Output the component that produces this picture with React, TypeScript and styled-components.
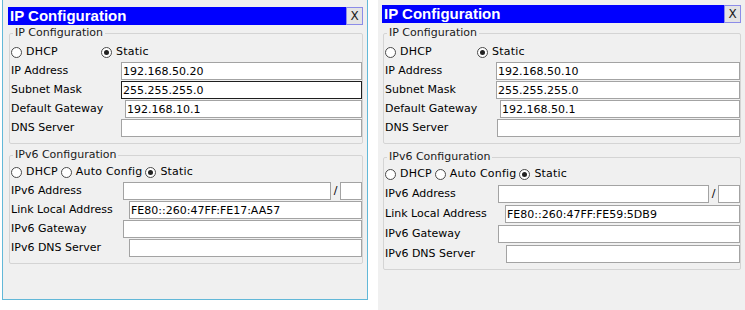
import React from 'react';
import styled, { createGlobalStyle } from 'styled-components';

type Field = { label: string; value?: string; lw: number; focused?: boolean };

type PanelConfig = {
  left: number;
  width: number;
  height: number;
  framed: boolean;
  padTop: number;
  titleGap: number;
  groupGap: number;
  staticAt: number;
  gap6: number;
  ipv4: Field[];
  ipv6Address: number;
  ipv6: Field[];
};

const panels: PanelConfig[] = [
  {
    left: 2,
    width: 366,
    height: 300,
    framed: true,
    padTop: 7,
    titleGap: 1,
    groupGap: 4,
    staticAt: 87,
    gap6: 1,
    ipv4: [
      { label: 'IP Address', value: '192.168.50.20', lw: 110 },
      { label: 'Subnet Mask', value: '255.255.255.0', lw: 110, focused: true },
      { label: 'Default Gateway', value: '192.168.10.1', lw: 114 },
      { label: 'DNS Server', lw: 110 }
    ],
    ipv6Address: 112,
    ipv6: [
      { label: 'Link Local Address', value: 'FE80::260:47FF:FE17:AA57', lw: 118 },
      { label: 'IPv6 Gateway', lw: 112 },
      { label: 'IPv6 DNS Server', lw: 118 }
    ]
  },
  {
    left: 10,
    width: 367,
    height: 310,
    framed: false,
    padTop: 5,
    titleGap: 3,
    groupGap: 6,
    staticAt: 89,
    gap6: 2,
    ipv4: [
      { label: 'IP Address', value: '192.168.50.10', lw: 111 },
      { label: 'Subnet Mask', value: '255.255.255.0', lw: 111 },
      { label: 'Default Gateway', value: '192.168.50.1', lw: 115 },
      { label: 'DNS Server', lw: 112 }
    ],
    ipv6Address: 113,
    ipv6: [
      { label: 'Link Local Address', value: 'FE80::260:47FF:FE59:5DB9', lw: 120 },
      { label: 'IPv6 Gateway', lw: 113 },
      { label: 'IPv6 DNS Server', lw: 121 }
    ]
  }
];

const Radio: React.FC<{ label: string; checked?: boolean; minWidth?: number }> = ({ label, checked, minWidth }) => (
  <RadioOption $minWidth={minWidth}>
    <RadioCircle $checked={!!checked} />
    <span>{label}</span>
  </RadioOption>
);

const FieldLine: React.FC<{ field: Field }> = ({ field }) => (
  <FieldRow>
    <Label $w={field.lw}>{field.label}</Label>
    <TextBox readOnly value={field.value ?? ''} $focused={!!field.focused} />
  </FieldRow>
);

const ConfigWindow: React.FC<{ cfg: PanelConfig }> = ({ cfg }) => (
  <Window $left={cfg.left} $width={cfg.width} $height={cfg.height} $framed={cfg.framed} $padTop={cfg.padTop}>
    <TitleBar $gap={cfg.titleGap}>
      <TitleText>IP Configuration</TitleText>
      <CloseButton>X</CloseButton>
    </TitleBar>

    <Group $padTop={3}>
      <Legend>IP Configuration</Legend>
      <Rows $gap={1}>
        <RadioRow>
          <Radio label="DHCP" minWidth={cfg.staticAt} />
          <Radio label="Static" checked />
        </RadioRow>
        {cfg.ipv4.map(f => (
          <FieldLine key={f.label} field={f} />
        ))}
      </Rows>
    </Group>

    <Group $top={cfg.groupGap} $padTop={1}>
      <Legend>IPv6 Configuration</Legend>
      <Rows $gap={cfg.gap6}>
        <RadioRow>
          <Radio label="DHCP" />
          <Radio label="Auto Config" />
          <Radio label="Static" checked />
        </RadioRow>
        <FieldRow>
          <Label $w={cfg.ipv6Address}>IPv6 Address</Label>
          <TextBox readOnly value="" />
          <Slash>/</Slash>
          <PrefixBox readOnly value="" />
        </FieldRow>
        {cfg.ipv6.map(f => (
          <FieldLine key={f.label} field={f} />
        ))}
      </Rows>
    </Group>
  </Window>
);

const App: React.FC = () => {
  return (
    <>
      <GlobalStyle />
      <Page>
        {panels.map((cfg, i) => (
          <ConfigWindow key={i} cfg={cfg} />
        ))}
      </Page>
    </>
  );
};

const GlobalStyle = createGlobalStyle`
  body {
    margin: 0;
    background: #ffffff;
    font-family: "DejaVu Sans", Verdana, sans-serif;
    font-size: 11px;
    color: #000;
  }
`;

const Page = styled.div`
  display: flex;
  align-items: flex-start;
  width: 745px;
  height: 310px;
  overflow: hidden;
`;

const Window = styled.div<{ $left: number; $width: number; $height: number; $framed: boolean; $padTop: number }>`
  box-sizing: border-box;
  margin-left: ${({ $left }) => $left}px;
  width: ${({ $width }) => $width}px;
  height: ${({ $height }) => $height}px;
  flex-shrink: 0;
  background: #f0f0f0;
  padding: ${({ $padTop }) => $padTop}px 4px 0 ${({ $framed }) => ($framed ? 5 : 4)}px;
  border: ${({ $framed }) => ($framed ? '1px solid #62b8d8' : 'none')};
  border-top: none;
  display: flex;
  flex-direction: column;
`;

const TitleBar = styled.div<{ $gap: number }>`
  display: flex;
  align-items: stretch;
  height: 18px;
  flex-shrink: 0;
  background: #0000ff;
  margin-bottom: ${({ $gap }) => $gap}px;
`;

const TitleText = styled.div`
  flex: 1;
  padding-left: 2px;
  color: #ffffff;
  font-family: "Liberation Sans", Arial, sans-serif;
  font-weight: bold;
  font-size: 15px;
  line-height: 18px;
  white-space: nowrap;
`;

const CloseButton = styled.div`
  box-sizing: border-box;
  width: 17px;
  display: flex;
  align-items: center;
  justify-content: center;
  background: #e4e4e4;
  border: 1px solid #8c8ce8;
  color: #1a1a1a;
  font-family: "DejaVu Sans", sans-serif;
  font-size: 12px;
`;

const Group = styled.fieldset<{ $top?: number; $padTop: number }>`
  margin: ${({ $top }) => $top ?? 0}px 0 0 1px;
  padding: ${({ $padTop }) => $padTop}px 0 6px 1px;
  border: 1px solid #d4d4d4;
  border-radius: 2px;
  min-width: 0;
  flex-shrink: 0;
`;

const Legend = styled.legend`
  margin-left: 2px;
  padding: 0 2px;
  line-height: 14px;
  color: #1a1a1a;
`;

const Rows = styled.div<{ $gap: number }>`
  display: flex;
  flex-direction: column;
  gap: ${({ $gap }) => $gap}px;
`;

const RadioRow = styled.div`
  display: flex;
  align-items: center;
  height: 18px;
`;

const RadioOption = styled.div<{ $minWidth?: number }>`
  display: flex;
  align-items: center;
  gap: 4px;
  margin-right: 3px;
  min-width: ${({ $minWidth }) => ($minWidth ? `${$minWidth}px` : 'auto')};
  box-sizing: border-box;
  line-height: 14px;
  letter-spacing: 0.2px;
`;

const RadioCircle = styled.span<{ $checked: boolean }>`
  box-sizing: border-box;
  width: 11px;
  height: 11px;
  border-radius: 50%;
  border: 1px solid #4a4a4a;
  background: #ffffff;
  display: flex;
  align-items: center;
  justify-content: center;

  &::after {
    content: '';
    display: ${({ $checked }) => ($checked ? 'block' : 'none')};
    width: 5px;
    height: 5px;
    border-radius: 50%;
    background: #222222;
  }
`;

const FieldRow = styled.div`
  display: flex;
  align-items: center;
  height: 18px;
  line-height: 14px;
`;

const Label = styled.span<{ $w: number }>`
  width: ${({ $w }) => $w}px;
  flex-shrink: 0;
  white-space: nowrap;
`;

const TextBox = styled.input<{ $focused?: boolean }>`
  box-sizing: border-box;
  flex: 1;
  min-width: 0;
  height: 18px;
  margin: 0;
  padding: 0 1px;
  border: 1px solid ${({ $focused }) => ($focused ? '#1e1e1e' : '#a3a3a3')};
  border-radius: 0;
  background: #ffffff;
  font-family: "DejaVu Sans", Verdana, sans-serif;
  font-size: 11px;
  line-height: 14px;
  color: #000;
  outline: none;
`;

const Slash = styled.span`
  width: 9px;
  text-align: center;
`;

const PrefixBox = styled(TextBox)`
  flex: 0 0 22px;
`;

export default App;
